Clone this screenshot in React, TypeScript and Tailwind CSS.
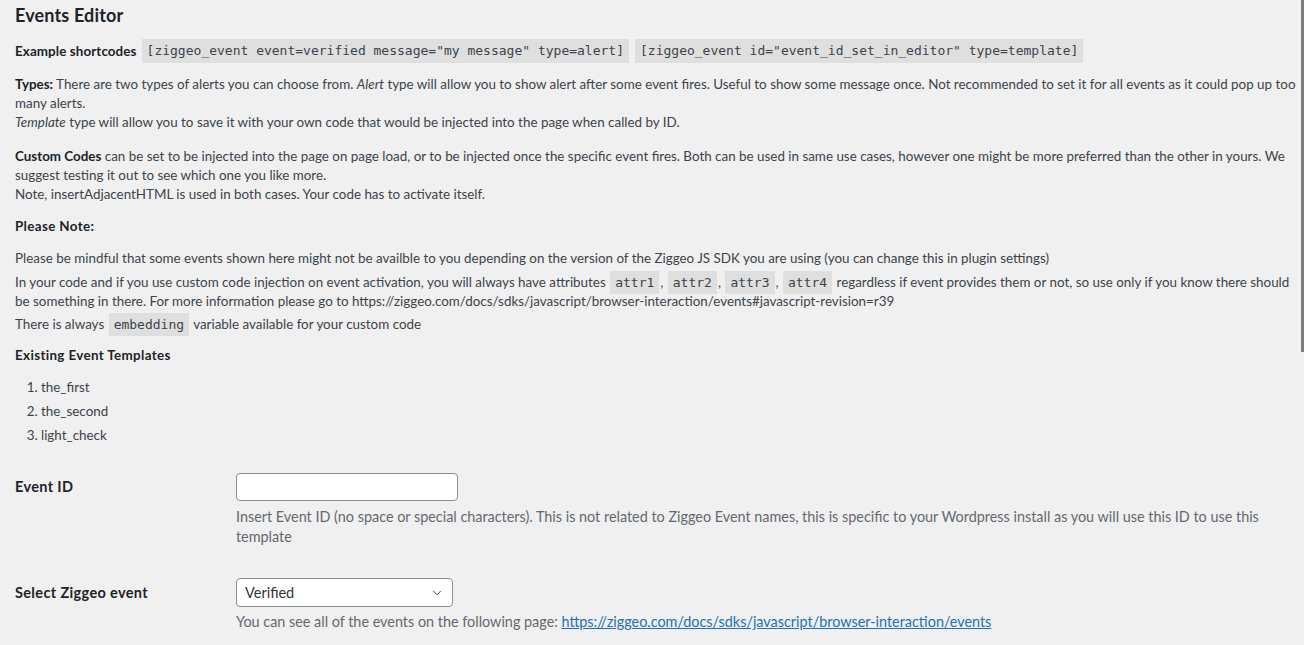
import { ChevronDown } from "lucide-react";

const FONT = "font-['Lato','Liberation_Sans',sans-serif]";
const BOLD = "font-bold tracking-[0.35px] text-[#1d2327]";

function Code({ children }: { children: React.ReactNode }) {
  return (
    <code className="mx-px bg-[#dfdfe0] px-[5px] py-[4px] font-['DejaVu_Sans_Mono',monospace] text-[13px] tracking-normal text-[#3c434a]">
      {children}
    </code>
  );
}

export default function App() {
  return (
    <div className={`relative h-[645px] overflow-hidden bg-[#f0f0f1] pl-[15px] text-[13.4px] text-[#3c434a] ${FONT}`}>
      <div className="absolute right-0 top-0 h-[352px] w-[3px] bg-[#7d7d7d]" />

      <h2 className="mt-[4px] text-[18px] font-bold leading-[22px] tracking-[0.15px] text-[#1d2327]">Events Editor</h2>

      <div className="mt-[13px] flex h-[24px] items-center whitespace-nowrap">
        <b className="mr-[5px] font-bold tracking-[0.1px] text-[#1d2327]">Example shortcodes</b>
        <span className="inline-flex h-[24px] items-center bg-[#dfdfe0] px-[5px] font-['DejaVu_Sans_Mono',monospace] text-[13px]">
          [ziggeo_event event=verified message="my message" type=alert]
        </span>
        <span className="ml-[6px] inline-flex h-[24px] items-center bg-[#dfdfe0] px-[5px] font-['DejaVu_Sans_Mono',monospace] text-[13px]">
          [ziggeo_event id="event_id_set_in_editor" type=template]
        </span>
      </div>

      <p className="mt-[12px] whitespace-nowrap leading-[19px]">
        <b className="font-bold text-[#1d2327]">Types:</b> There are two types of alerts you can choose from. <i>Alert</i> type will allow you to show alert after some event fires. Useful to show some message once. Not recommended to set it for all events as it could pop up too
        <br />
        many alerts.
        <br />
        <i>Template</i> type will allow you to save it with your own code that would be injected into the page when called by ID.
      </p>

      <p className="mt-[15px] whitespace-nowrap leading-[19px]">
        <b className="font-bold text-[#1d2327]">Custom Codes</b> can be set to be injected into the page on page load, or to be injected once the specific event fires. Both can be used in same use cases, however one might be more preferred than the other in yours. We
        <br />
        suggest testing it out to see which one you like more.
        <br />
        Note, insertAdjacentHTML is used in both cases. Your code has to activate itself.
      </p>

      <p className={`mt-[13px] leading-[19px] ${BOLD}`}>Please Note:</p>

      <p className="mt-[13px] whitespace-nowrap leading-[19px]">
        Please be mindful that some events shown here might not be availble to you depending on the version of the Ziggeo JS SDK you are using (you can change this in plugin settings)
      </p>
      <p className="mt-[5px] whitespace-nowrap leading-[18px]">
        In your code and if you use custom code injection on event activation, you will always have attributes <Code>attr1</Code>, <Code>attr2</Code>, <Code>attr3</Code>, <Code>attr4</Code> regardless if event provides them or not, so use only if you know there should
        <br />
        be something in there. For more information please go to https://ziggeo.com/docs/sdks/javascript/browser-interaction/events#javascript-revision=r39
      </p>
      <p className="mt-[5px] whitespace-nowrap leading-[19px]">
        There is always <Code>embedding</Code> variable available for your custom code
      </p>

      <p className={`mt-[12px] leading-[19px] ${BOLD}`}>Existing Event Templates</p>
      <ol className="mt-[13px] list-decimal space-y-[5px] pl-[26px] leading-[19px]">
        <li>the_first</li>
        <li>the_second</li>
        <li>light_check</li>
      </ol>

      <div className="mt-[28px] flex">
        <label className={`w-[221px] shrink-0 text-[14.5px] leading-[28px] ${BOLD}`}>Event ID</label>
        <div>
          <input
            type="text"
            className="block h-[28px] w-[222px] rounded-[4px] border border-[#8c8f94] bg-white px-2 text-[14px] outline-none"
          />
          <p className="mt-[6px] whitespace-nowrap text-[14.4px] leading-[20px] text-[#646970]">
            Insert Event ID (no space or special characters). This is not related to Ziggeo Event names, this is specific to your Wordpress install as you will use this ID to use this
            <br />
            template
          </p>
        </div>
      </div>

      <div className="mt-[31px] flex">
        <label className={`w-[221px] shrink-0 text-[14.5px] leading-[29px] ${BOLD}`}>Select Ziggeo event</label>
        <div>
          <div className="flex h-[29px] w-[217px] items-center justify-between rounded-[4px] border border-[#8c8f94] bg-white pl-[8px] pr-[8px] text-[14.5px] text-[#2c3338]">
            <span>Verified</span>
            <ChevronDown className="h-[14px] w-[14px] text-[#2c3338]" strokeWidth={1.5} />
          </div>
          <p className="mt-[5px] whitespace-nowrap text-[14.4px] leading-[20px] text-[#646970]">
            You can see all of the events on the following page:{" "}
            <a className="text-[#2271b1] underline" href="#">
              https://ziggeo.com/docs/sdks/javascript/browser-interaction/events
            </a>
          </p>
        </div>
      </div>
    </div>
  );
}
